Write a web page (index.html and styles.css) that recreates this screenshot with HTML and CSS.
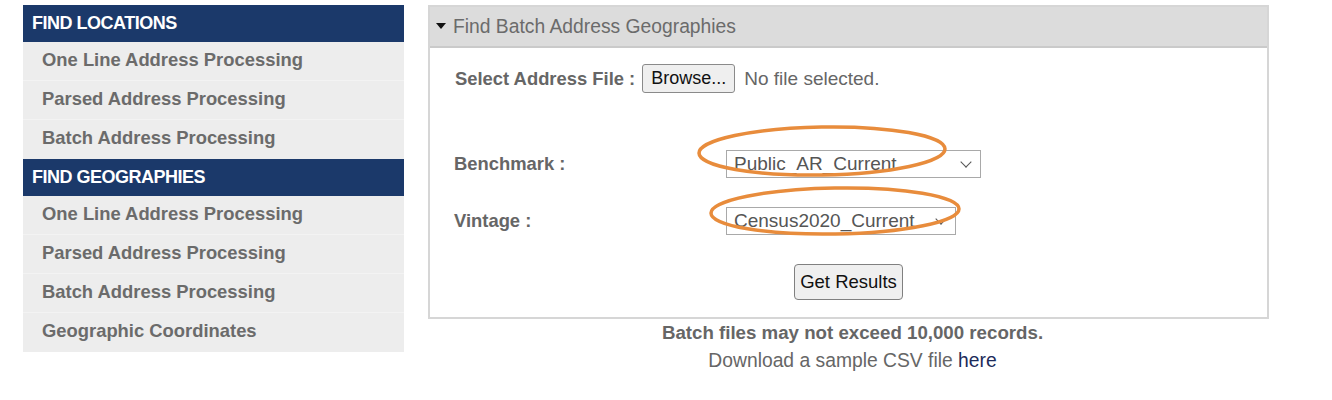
FILE: index.html
```html
<!DOCTYPE html>
<html lang="en">
<head>
    <meta charset="UTF-8">
    <title>Find Batch Address Geographies</title>
    <link rel="stylesheet" href="styles.css">
</head>
<body>
    <div class="page">
        <aside class="side-nav">
            <h3 class="nav-head">FIND LOCATIONS</h3>
            <ul class="nav-list">
                <li><a href="#">One Line Address Processing</a></li>
                <li><a href="#">Parsed Address Processing</a></li>
                <li><a href="#">Batch Address Processing</a></li>
            </ul>
            <h3 class="nav-head">FIND GEOGRAPHIES</h3>
            <ul class="nav-list">
                <li><a href="#">One Line Address Processing</a></li>
                <li><a href="#">Parsed Address Processing</a></li>
                <li><a href="#">Batch Address Processing</a></li>
                <li><a href="#">Geographic Coordinates</a></li>
            </ul>
        </aside>

        <main class="content">
            <div class="panel">
                <div class="panel-head"><span class="caret"></span>Find Batch Address Geographies</div>
                <form class="panel-body">
                    <div class="file-row">
                        <label class="field-label">Select Address File :</label>
                        <span class="browse-btn">Browse...</span>
                        <span class="file-name">No file selected.</span>
                    </div>
                    <div class="field-row first">
                        <label class="field-label wide">Benchmark :</label>
                        <div class="select-box bench">Public_AR_Current<span class="chev"></span></div>
                    </div>
                    <div class="field-row">
                        <label class="field-label wide">Vintage :</label>
                        <div class="select-box vintage">Census2020_Current<span class="chev"></span></div>
                    </div>
                    <div class="submit-row">
                        <button type="button" class="submit-btn">Get Results</button>
                    </div>
                </form>
            </div>
            <p class="note"><strong>Batch files may not exceed 10,000 records.</strong></p>
            <p class="note">Download a sample CSV file <a href="#">here</a></p>
        </main>
    </div>

    <!-- hand drawn highlight marks -->
    <svg class="marks" width="1332" height="400" viewBox="0 0 1332 400">
        <ellipse cx="822" cy="151" rx="123" ry="24" transform="rotate(-1 822 151)" />
        <ellipse cx="835" cy="211" rx="124" ry="23" transform="rotate(-1 835 211)" />
    </svg>
</body>
</html>
```

FILE: styles.css
```css
body {
    margin: 0;
    font-family: "Liberation Sans", Arial, sans-serif;
    color: #666;
    background: #fff;
}
.page {
    display: flex;
    align-items: flex-start;
    padding: 5px 0 0 23px;
}
.side-nav {
    width: 381px;
    background-color: #ededed;
}
.nav-head {
    margin: 0;
    height: 37px;
    line-height: 37px;
    padding-left: 9px;
    background-color: #1b396a;
    color: #fff;
    font-size: 18px;
    letter-spacing: -0.5px;
    font-weight: bold;
}
.nav-list {
    list-style: none;
    margin: 0;
    padding: 0;
}
.nav-list li {
    height: 38px;
    line-height: 36px;
    border-bottom: 1px solid #f3f3f3;
    padding-left: 19px;
}
.nav-list li:last-child {
    height: 39px;
    border-bottom: none;
}
.nav-list a {
    color: #6b6b6b;
    text-decoration: none;
    font-weight: bold;
    font-size: 18.4px;
}
.content {
    margin-left: 24px;
    width: 841px;
}
.panel {
    border: 2px solid #d6d6d6;
}
.panel-head {
    height: 39px;
    line-height: 39px;
    background-color: #dcdcdc;
    border-bottom: 2px solid #cacaca;
    padding-left: 6px;
    font-size: 19.3px;
    color: #6b6b6b;
}
.caret {
    display: inline-block;
    width: 0;
    height: 0;
    border-left: 5px solid transparent;
    border-right: 5px solid transparent;
    border-top: 6px solid #111;
    margin-right: 7px;
    vertical-align: 4px;
}
.panel-body {
    padding: 16px 0 17px 24px;
}
.field-label {
    font-weight: bold;
    font-size: 18.4px;
    color: #666;
}
.field-label.wide {
    width: 272px;
}
.file-row {
    display: flex;
    align-items: center;
    height: 29px;
    padding-left: 1px;
}
.browse-btn {
    margin-left: 7px;
    height: 27px;
    line-height: 27px;
    padding: 0 8px;
    border: 1px solid #8a8a8a;
    border-radius: 3px;
    background-color: #efefef;
    color: #111;
    font-size: 18px;
}
.file-name {
    margin-left: 9px;
    font-size: 19px;
    color: #666;
}
.field-row {
    display: flex;
    align-items: center;
    height: 28px;
    margin-top: 29px;
}
.field-row.first {
    margin-top: 57px;
}
.select-box {
    position: relative;
    box-sizing: border-box;
    height: 28px;
    line-height: 26px;
    padding-left: 7px;
    border: 1px solid #a9a9a9;
    background-color: #fff;
    font-size: 19px;
    color: #555;
    white-space: nowrap;
}
.select-box.bench {
    width: 255px;
}
.select-box.vintage {
    width: 230px;
}
.chev {
    position: absolute;
    right: 10px;
    top: 7px;
    width: 7px;
    height: 7px;
    border-right: 1.5px solid #555;
    border-bottom: 1.5px solid #555;
    transform: rotate(45deg);
}
.submit-row {
    margin-top: 29px;
    padding-right: 24px;
    text-align: center;
}
.submit-btn {
    height: 36px;
    width: 109px;
    padding: 0;
    border: 1px solid #808080;
    border-radius: 4px;
    background-color: #efefef;
    color: #111;
    font-family: "Liberation Sans", Arial, sans-serif;
    font-size: 18.5px;
}
.note {
    margin: 0;
    padding-left: 8px;
    line-height: 28px;
    text-align: center;
    font-size: 18.7px;
    color: #666;
}
.note + .note {
    font-size: 19.3px;
}
.note a {
    color: #1c2b5a;
    text-decoration: none;
}
.marks {
    position: absolute;
    left: 0;
    top: 0;
    pointer-events: none;
}
.marks ellipse {
    fill: none;
    stroke: #e88c3c;
    stroke-width: 3.5;
}
```
